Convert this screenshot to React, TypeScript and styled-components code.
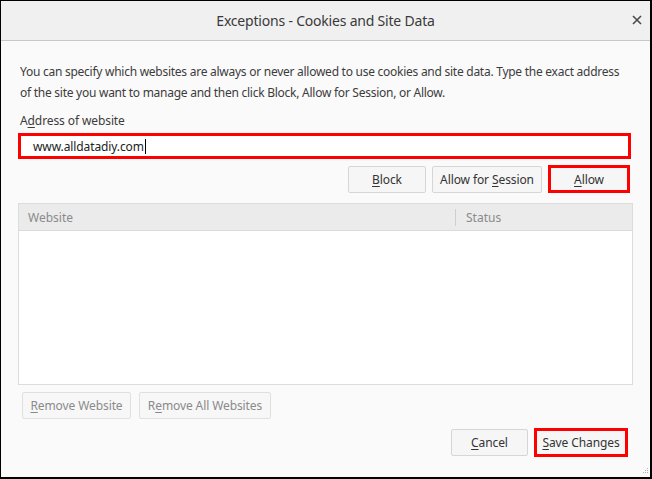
import React from "react";
import styled, { createGlobalStyle } from "styled-components";

const Global = createGlobalStyle`
  html, body { margin: 0; padding: 0; background: #000; }
  * { box-sizing: border-box; }
  body { font-family: "Noto Sans", "Open Sans", sans-serif; }
`;

const Window = styled.div`
  width: 652px;
  height: 479px;
  border-style: solid;
  border-color: #000;
  border-width: 1px 2px 2px 1px;
  background: #fafafa;
  display: flex;
  flex-direction: column;
  position: relative;
`;

const TitleBar = styled.div`
  height: 40px;
  background: #f0f0f0;
  border-bottom: 1px solid #c8c8c8;
  display: flex;
  align-items: center;
  justify-content: center;
  position: relative;
  font-size: 14px;
  letter-spacing: -0.2px;
  color: #3a3a3a;
`;

const Close = styled.span`
  position: absolute;
  right: 5px;
  top: 9px;
  width: 16px;
  height: 20px;
  display: flex;
  align-items: center;
  justify-content: center;
`;

const Body = styled.div`
  flex: 1;
  display: flex;
  flex-direction: column;
  padding: 20px 18px 0 17px;
`;

const Desc = styled.p`
  margin: 0 0 0 2px;
  font-size: 12px;
  line-height: 21px;
  letter-spacing: -0.26px;
  white-space: nowrap;
  color: #3c3c3c;
`;

const Label = styled.div`
  margin: 8px 0 0 2px;
  font-size: 12px;
  line-height: 20px;
  letter-spacing: -0.1px;
  color: #3c3c3c;
`;

const Input = styled.div`
  margin-top: 2px;
  width: 613px;
  height: 26px;
  border: 3px solid #ff0000;
  background: #fff;
  display: flex;
  align-items: center;
  padding-left: 12px;
  font-size: 12px;
  letter-spacing: -0.1px;
  color: #222;
`;

const Caret = styled.span`
  display: inline-block;
  width: 1px;
  height: 15px;
  background: #000;
  margin-left: 1px;
`;

const ButtonRow = styled.div<{ $top: number; $right: number }>`
  display: flex;
  justify-content: flex-end;
  align-items: center;
  gap: 6px;
  margin-top: ${(p) => p.$top}px;
  padding-right: ${(p) => p.$right}px;
`;

const Btn = styled.div<{ $w: number; $h?: number; $red?: boolean; $disabled?: boolean }>`
  width: ${(p) => p.$w}px;
  height: ${(p) => p.$h ?? 27}px;
  border: ${(p) => (p.$red ? "3px solid #ff0000" : "1px solid #d6d6d6")};
  background: ${(p) => (p.$disabled ? "#f7f7f7" : "#f6f6f6")};
  border-radius: ${(p) => (p.$red ? "0" : "2px")};
  display: flex;
  align-items: center;
  justify-content: center;
  font-size: 12px;
  letter-spacing: -0.1px;
  white-space: pre;
  color: ${(p) => (p.$disabled ? "#8a8a8a" : "#333")};
  border-color: ${(p) => (p.$red ? "#ff0000" : p.$disabled ? "#e0e0e0" : "#d6d6d6")};
`;

const Table = styled.div`
  margin-top: 10px;
  width: 615px;
  height: 182px;
  border: 1px solid #dcdcdc;
  background: #fff;
  display: flex;
  flex-direction: column;
`;

const Header = styled.div`
  height: 27px;
  background: #ebebeb;
  border-bottom: 1px solid #dadada;
  display: grid;
  grid-template-columns: 436px 1fr;
  align-items: center;
  font-size: 12px;
  color: #8a8a8a;
`;

const HeadCell = styled.div<{ $divider?: boolean }>`
  padding-left: ${(p) => (p.$divider ? "10px" : "9px")};
  border-left: ${(p) => (p.$divider ? "1px solid #cfcfcf" : "none")};
  height: 17px;
  line-height: 17px;
`;

const LeftRow = styled.div`
  display: flex;
  gap: 8px;
  margin-top: 7px;
  padding-left: 4px;
`;

const Grip = styled.svg`
  position: absolute;
  right: 1px;
  bottom: 1px;
`;

const U = styled.span`
  text-decoration: underline;
  text-underline-offset: 2px;
`;

export default function App() {
  return (
    <>
      <Global />
      <Window>
        <TitleBar>
          Exceptions - Cookies and Site Data
          <Close>
            <svg width="10" height="10" viewBox="0 0 10 10">
              <path d="M1 1 L9 9 M9 1 L1 9" stroke="#4a4a4a" strokeWidth="1.6" />
            </svg>
          </Close>
        </TitleBar>
        <Body>
          <Desc>
            You can specify which websites are always or never allowed to use cookies and site data. Type the exact address
            <br />
            of the site you want to manage and then click Block, Allow for Session, or Allow.
          </Desc>
          <Label>
            A<U>d</U>dress of website
          </Label>
          <Input>
            www.alldatadiy.com
            <Caret />
          </Input>
          <ButtonRow $top={6} $right={2}>
            <Btn $w={78}>
              <U>B</U>lock
            </Btn>
            <Btn $w={110}>
              {"Allow for "}
              <U>S</U>ession
            </Btn>
            <Btn $w={82} $h={28} $red>
              <U>A</U>llow
            </Btn>
          </ButtonRow>
          <Table>
            <Header>
              <HeadCell>Website</HeadCell>
              <HeadCell $divider>Status</HeadCell>
            </Header>
          </Table>
          <LeftRow>
            <Btn $w={109} $h={27} $disabled>
              <U>R</U>emove Website
            </Btn>
            <Btn $w={132} $h={27} $disabled>
              R<U>e</U>move All Websites
            </Btn>
          </LeftRow>
          <ButtonRow $top={9} $right={4}>
            <Btn $w={77}>
              <U>C</U>ancel
            </Btn>
            <Btn $w={94} $h={29} $red>
              <U>S</U>ave Changes
            </Btn>
          </ButtonRow>
        </Body>
        <Grip width="10" height="10" viewBox="0 0 10 10">
          <rect x="8" y="2" width="1" height="1" fill="#b0b0b0" />
          <rect x="6" y="4" width="1" height="1" fill="#b0b0b0" />
          <rect x="8" y="4" width="1" height="1" fill="#b0b0b0" />
          <rect x="4" y="6" width="1" height="1" fill="#b0b0b0" />
          <rect x="6" y="6" width="1" height="1" fill="#b0b0b0" />
          <rect x="8" y="6" width="1" height="1" fill="#b0b0b0" />
        </Grip>
      </Window>
    </>
  );
}
